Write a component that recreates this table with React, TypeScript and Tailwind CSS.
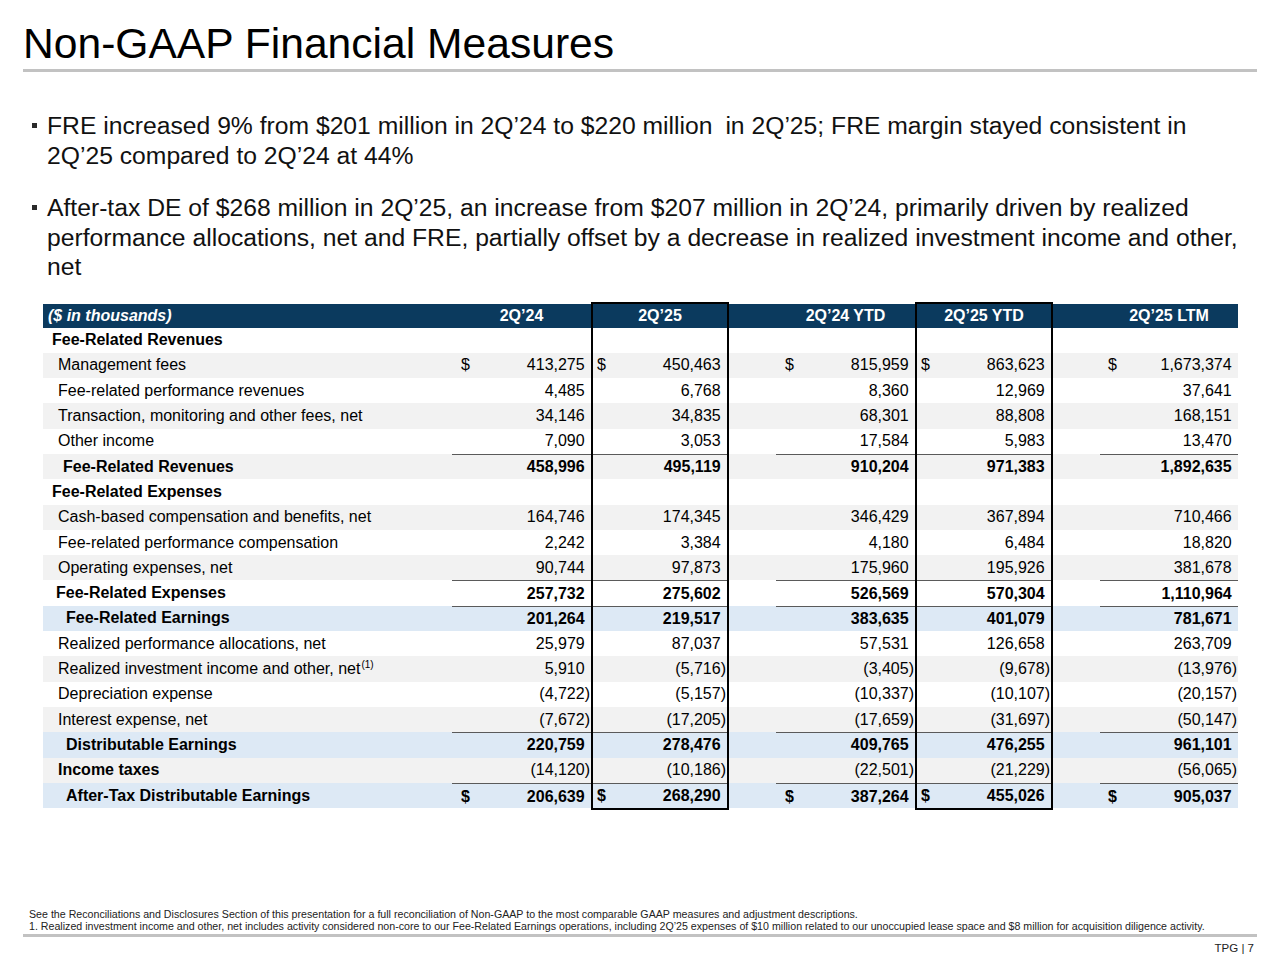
import React from "react"

type Row = {
  label: string
  vals?: string[]
  kind?: "section" | "item" | "total"
  bg: "white" | "gray" | "blue"
  indent: number
  dollar?: boolean
  line?: boolean
  boldVals?: boolean
  sup?: string
}

const rows: Row[] = [
  { label: "Fee-Related Revenues", kind: "section", bg: "white", indent: 9 },
  { label: "Management fees", vals: ["413,275", "450,463", "815,959", "863,623", "1,673,374"], bg: "gray", indent: 15, dollar: true },
  { label: "Fee-related performance revenues", vals: ["4,485", "6,768", "8,360", "12,969", "37,641"], bg: "white", indent: 15 },
  { label: "Transaction, monitoring and other fees, net", vals: ["34,146", "34,835", "68,301", "88,808", "168,151"], bg: "gray", indent: 15 },
  { label: "Other income", vals: ["7,090", "3,053", "17,584", "5,983", "13,470"], bg: "white", indent: 15 },
  { label: "Fee-Related Revenues", vals: ["458,996", "495,119", "910,204", "971,383", "1,892,635"], kind: "total", bg: "gray", indent: 20, line: true, boldVals: true },
  { label: "Fee-Related Expenses", kind: "section", bg: "white", indent: 9 },
  { label: "Cash-based compensation and benefits, net", vals: ["164,746", "174,345", "346,429", "367,894", "710,466"], bg: "gray", indent: 15 },
  { label: "Fee-related performance compensation", vals: ["2,242", "3,384", "4,180", "6,484", "18,820"], bg: "white", indent: 15 },
  { label: "Operating expenses, net", vals: ["90,744", "97,873", "175,960", "195,926", "381,678"], bg: "gray", indent: 15 },
  { label: "Fee-Related Expenses", vals: ["257,732", "275,602", "526,569", "570,304", "1,110,964"], kind: "total", bg: "white", indent: 13, line: true, boldVals: true },
  { label: "Fee-Related Earnings", vals: ["201,264", "219,517", "383,635", "401,079", "781,671"], kind: "total", bg: "blue", indent: 23, line: true, boldVals: true },
  { label: "Realized performance allocations, net", vals: ["25,979", "87,037", "57,531", "126,658", "263,709"], bg: "white", indent: 15 },
  { label: "Realized investment income and other, net", sup: "(1)", vals: ["5,910", "(5,716)", "(3,405)", "(9,678)", "(13,976)"], bg: "gray", indent: 15 },
  { label: "Depreciation expense", vals: ["(4,722)", "(5,157)", "(10,337)", "(10,107)", "(20,157)"], bg: "white", indent: 15 },
  { label: "Interest expense, net", vals: ["(7,672)", "(17,205)", "(17,659)", "(31,697)", "(50,147)"], bg: "gray", indent: 15 },
  { label: "Distributable Earnings", vals: ["220,759", "278,476", "409,765", "476,255", "961,101"], kind: "total", bg: "blue", indent: 23, line: true, boldVals: true },
  { label: "Income taxes", vals: ["(14,120)", "(10,186)", "(22,501)", "(21,229)", "(56,065)"], kind: "total", bg: "gray", indent: 15 },
  { label: "After-Tax Distributable Earnings", vals: ["206,639", "268,290", "387,264", "455,026", "905,037"], kind: "total", bg: "blue", indent: 23, line: true, boldVals: true, dollar: true },
]

const bgClass = { white: "bg-white", gray: "bg-[#f2f2f2]", blue: "bg-[#dde9f5]" }

const gridCols = "grid grid-cols-[409px_139px_138px_47px_139px_138px_47px_138px]"

// column settings: left padding for "$" and whether it is one of the boxed columns
const numCols = [
  { pl: "pl-[9px]", box: false },
  { pl: "pl-[4px]", box: true },
  { pl: "pl-[9px]", box: false },
  { pl: "pl-[4px]", box: true },
  { pl: "pl-[8px]", box: false },
]

function NumCell({ v, dollar, bold, line, box, last, pl }: { v?: string; dollar?: boolean; bold?: boolean; line?: boolean; box: boolean; last: boolean; pl: string }) {
  const neg = v?.startsWith("(")
  const body = neg ? v!.slice(0, -1) : v
  return (
    <div className={`flex flex-col h-full ${box ? "border-x-2 border-black" : ""} ${box && last ? "border-b-2" : ""}`}>
      {line && <div className="h-px bg-[#5a5a5a]" />}
      <div className={`flex-1 flex items-center justify-between ${pl} pr-[1px] ${bold ? "font-bold" : ""}`}>
        <span>{dollar ? "$" : ""}</span>
        {v && (
          <span>
            {body}
            <span className={neg ? "" : "invisible"}>)</span>
          </span>
        )}
      </div>
    </div>
  )
}

function TableRow({ row, last }: { row: Row; last: boolean }) {
  const bold = row.kind === "section" || row.kind === "total"
  const cell = (i: number) => (
    <NumCell
      v={row.vals?.[i]}
      dollar={row.dollar}
      bold={row.boldVals}
      line={row.line}
      box={numCols[i].box}
      last={last}
      pl={numCols[i].pl}
    />
  )
  return (
    <div className={`${gridCols} h-[25.3px] ${bgClass[row.bg]}`}>
      <div className={`flex items-center whitespace-nowrap ${bold ? "font-bold" : ""}`} style={{ paddingLeft: row.indent }}>
        <span>
          {row.label}
          {row.sup && <span className="text-[10px] font-normal relative -top-[6px] ml-[1px]">{row.sup}</span>}
        </span>
      </div>
      {cell(0)}
      {cell(1)}
      <div />
      {cell(2)}
      {cell(3)}
      <div />
      {cell(4)}
    </div>
  )
}

function Bullet({ children }: { children: React.ReactNode }) {
  return (
    <div className="flex items-start pl-[32px]">
      <div className="w-[5px] h-[5px] bg-[#2a2a2a] mt-[12px] shrink-0" />
      <p className="ml-[10px] w-[1205px] text-[24.7px] leading-[29.5px] text-[#111]">{children}</p>
    </div>
  )
}

export default function App() {
  const head = "bg-[#0b3a5e] text-white font-bold flex items-center justify-center"
  return (
    <div className="w-[1280px] h-[960px] bg-white flex flex-col text-black font-['Liberation_Sans',Arial,sans-serif]">
      <h1 className="mt-[22px] ml-[23px] text-[42.6px] leading-[42px] font-normal">Non-GAAP Financial Measures</h1>
      <div className="mt-[5px] mx-[23px] h-[3px] bg-[#c2c2c2]" />

      <div className="mt-[39px] flex flex-col gap-[23px]">
        <Bullet>
          FRE increased 9% from $201 million in 2Q’24 to $220 million <span className="ml-[6px]">in</span> 2Q’25; FRE margin stayed consistent in 2Q’25 compared to 2Q’24 at 44%
        </Bullet>
        <Bullet>
          After-tax DE of $268 million in 2Q’25, an increase from $207 million in 2Q’24, primarily driven by realized performance allocations, net and FRE, partially offset by a decrease in realized investment income and other, net
        </Bullet>
      </div>

      <div className="mt-[20px] ml-[43px] w-[1195px] text-[16px]">
        <div className={`${gridCols} h-[26px]`}>
          <div className="mt-[2px] bg-[#0b3a5e] text-white font-bold italic flex items-center pl-[5px]">($ in thousands)</div>
          <div className={`mt-[2px] ${head}`}>2Q’24</div>
          <div className={`border-x-2 border-t-2 border-black ${head}`}>2Q’25</div>
          <div className="mt-[2px] bg-[#0b3a5e]" />
          <div className={`mt-[2px] ${head}`}>2Q’24 YTD</div>
          <div className={`border-x-2 border-t-2 border-black ${head}`}>2Q’25 YTD</div>
          <div className="mt-[2px] bg-[#0b3a5e]" />
          <div className={`mt-[2px] ${head}`}>2Q’25 LTM</div>
        </div>
        {rows.map((r, i) => (
          <TableRow key={i} row={r} last={i === rows.length - 1} />
        ))}
      </div>

      <div className="mt-[100px] ml-[29px] text-[10.65px] leading-[12px] text-[#222]">
        <p>See the Reconciliations and Disclosures Section of this presentation for a full reconciliation of Non-GAAP to the most comparable GAAP measures and adjustment descriptions.</p>
        <p>1. Realized investment income and other, net includes activity considered non-core to our Fee-Related Earnings operations, including 2Q’25 expenses of $10 million related to our unoccupied lease space and $8 million for acquisition diligence activity.</p>
      </div>
      <div className="mt-[2px] mx-[23px] h-[3px] bg-[#c2c2c2]" />
      <div className="mt-[5px] mr-[26px] self-end text-[11.5px] leading-[12px] text-[#222]">TPG | 7</div>
    </div>
  )
}
